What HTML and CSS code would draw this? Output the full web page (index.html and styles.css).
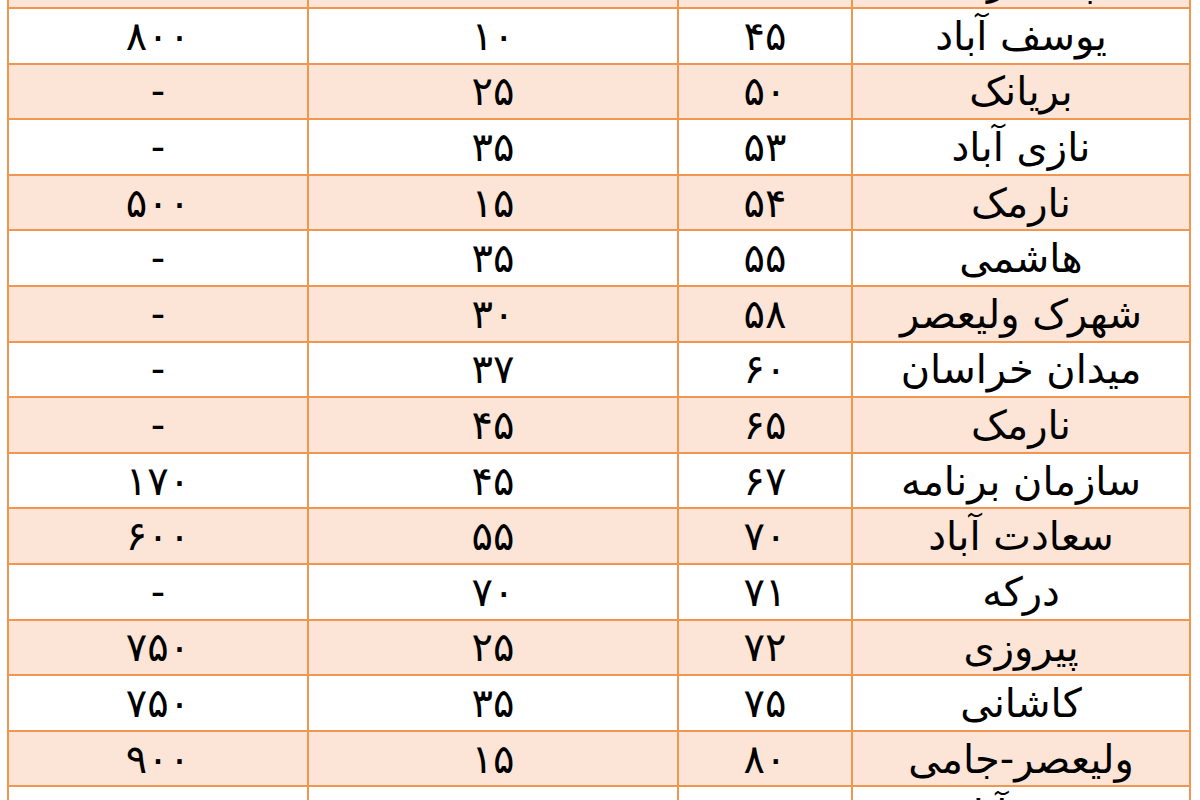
FILE: index.html
```html
<!DOCTYPE html>
<html lang="fa" dir="rtl">
<head>
<meta charset="utf-8">
<title>جدول</title>
<link rel="stylesheet" href="styles.css">
</head>
<body>
<table class="grid">
  <colgroup>
    <col class="c-name"><col class="c-a"><col class="c-b"><col class="c-c">
  </colgroup>
  <tbody>
    <tr class="alt"><td>پاسداران</td><td>۴۰</td><td>۲۰</td><td>۶۰۰</td></tr>
    <tr><td>یوسف آباد</td><td>۴۵</td><td>۱۰</td><td>۸۰۰</td></tr>
    <tr class="alt"><td>بریانک</td><td>۵۰</td><td>۲۵</td><td>-</td></tr>
    <tr><td>نازی آباد</td><td>۵۳</td><td>۳۵</td><td>-</td></tr>
    <tr class="alt"><td>نارمک</td><td>۵۴</td><td>۱۵</td><td>۵۰۰</td></tr>
    <tr><td>هاشمی</td><td>۵۵</td><td>۳۵</td><td>-</td></tr>
    <tr class="alt"><td>شهرک ولیعصر</td><td>۵۸</td><td>۳۰</td><td>-</td></tr>
    <tr><td>میدان خراسان</td><td>۶۰</td><td>۳۷</td><td>-</td></tr>
    <tr class="alt"><td>نارمک</td><td>۶۵</td><td>۴۵</td><td>-</td></tr>
    <tr><td>سازمان برنامه</td><td>۶۷</td><td>۴۵</td><td>۱۷۰</td></tr>
    <tr class="alt"><td>سعادت آباد</td><td>۷۰</td><td>۵۵</td><td>۶۰۰</td></tr>
    <tr><td>درکه</td><td>۷۱</td><td>۷۰</td><td>-</td></tr>
    <tr class="alt"><td>پیروزی</td><td>۷۲</td><td>۲۵</td><td>۷۵۰</td></tr>
    <tr><td>کاشانی</td><td>۷۵</td><td>۳۵</td><td>۷۵۰</td></tr>
    <tr class="alt"><td>ولیعصر-جامی</td><td>۸۰</td><td>۱۵</td><td>۹۰۰</td></tr>
    <tr><td>فرح آباد</td><td>۸۵</td><td>۲۰</td><td>-</td></tr>
  </tbody>
</table>
</body>
</html>
```
FILE: styles.css
```css
html, body {
  margin: 0;
  padding: 0;
  background: #ffffff;
  overflow: hidden;
}
body {
  height: 800px;
}
.grid {
  direction: rtl;
  border-collapse: collapse;
  table-layout: fixed;
  width: 1182px;
  margin: -48.6px 9px 0 0;
  font-family: "DejaVu Sans", "Liberation Sans", sans-serif;
  font-size: 40px;
  color: #000;
}
.c-name { width: 338px; }
.c-a { width: 174px; }
.c-b { width: 370px; }
.c-c { width: 300px; }
.grid td {
  border: 2px solid #f09650;
  height: 53.6px;
  padding: 0;
  text-align: center;
  vertical-align: middle;
  line-height: 1;
  white-space: nowrap;
  overflow: hidden;
}
.grid tr.alt td {
  background: #fce4d6;
}
```
